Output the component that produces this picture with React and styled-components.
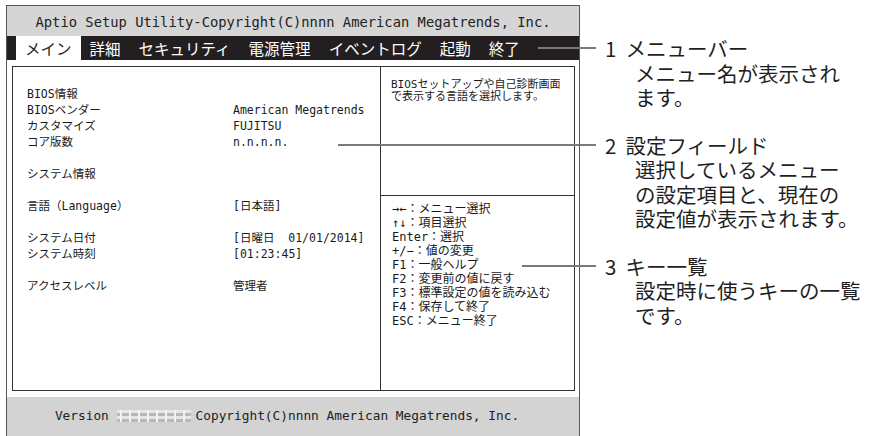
import React from 'react'
import styled, { createGlobalStyle } from 'styled-components';

const mono = `"DejaVu Sans Mono", "Noto Sans CJK JP", monospace`;
const jp = `"Noto Sans CJK JP", sans-serif`;

const menus = ['メイン', '詳細', 'セキュリティ', '電源管理', 'イベントログ', '起動', '終了'];

const settings = [
    [
        { label: 'BIOS情報' },
        { label: 'BIOSベンダー', value: 'American Megatrends' },
        { label: 'カスタマイズ', value: 'FUJITSU' },
        { label: 'コア版数', value: 'n.n.n.n.' },
    ],
    [{ label: 'システム情報' }],
    [{ label: '言語（Language）', value: '[日本語]' }],
    [
        { label: 'システム日付', value: '[日曜日  01/01/2014]' },
        { label: 'システム時刻', value: '[01:23:45]' },
    ],
    [{ label: 'アクセスレベル', value: '管理者' }],
];

const keys = [
    '→←：メニュー選択',
    '↑↓：項目選択',
    'Enter：選択',
    '+/−：値の変更',
    'F1：一般ヘルプ',
    'F2：変更前の値に戻す',
    'F3：標準設定の値を読み込む',
    'F4：保存して終了',
    'ESC：メニュー終了',
];

const notes = [
    { num: '1', title: 'メニューバー', lines: ['メニュー名が表示され', 'ます。'] },
    { num: '2', title: '設定フィールド', lines: ['選択しているメニュー', 'の設定項目と、現在の', '設定値が表示されます。'] },
    { num: '3', title: 'キー一覧', lines: ['設定時に使うキーの一覧', 'です。'] },
];

const leaders = [
    { top: 47, left: 538, width: 58 },
    { top: 144, left: 338, width: 258 },
    { top: 265, left: 522, width: 74 },
];

function App() {
    return (
        <StyledPage>
            <GlobalStyle />
            <Screen>
                <TitleBar>Aptio Setup Utility-Copyright(C)nnnn American Megatrends, Inc.</TitleBar>
                <MenuBar>
                    {menus.map((m, i) => (
                        <MenuItem key={m} $active={i === 0}>{m}</MenuItem>
                    ))}
                </MenuBar>
                <Body>
                    <Panel>
                        <Fields>
                            {settings.map((group, gi) => (
                                <Group key={gi}>
                                    {group.map((row) => (
                                        <Row key={row.label}>
                                            <span>{row.label}</span>
                                            <span>{row.value}</span>
                                        </Row>
                                    ))}
                                </Group>
                            ))}
                        </Fields>
                        <Side>
                            <Help>
                                <div>BIOSセットアップや自己診断画面</div>
                                <div>で表示する言語を選択します。</div>
                            </Help>
                            <Keys>
                                {keys.map((k) => <div key={k}>{k}</div>)}
                            </Keys>
                        </Side>
                    </Panel>
                </Body>
                <Footer>
                    Version <Masked />Copyright(C)nnnn American Megatrends, Inc.
                </Footer>
            </Screen>
            <Notes>
                {notes.map((n) => (
                    <Note key={n.num}>
                        <NoteHead>
                            <NoteNum>{n.num}</NoteNum>
                            <span>{n.title}</span>
                        </NoteHead>
                        {n.lines.map((l) => <NoteLine key={l}>{l}</NoteLine>)}
                    </Note>
                ))}
            </Notes>
            {leaders.map((l) => (
                <Leader key={l.top} $top={l.top} $left={l.left} $width={l.width} />
            ))}
        </StyledPage>
    )
}

const GlobalStyle = createGlobalStyle`
    body{
        margin: 0;
        background: #fff;
    }
`;

const StyledPage = styled.div`
    position: relative;
    width: 873px;
    height: 436px;
    overflow: hidden;
    display: flex;
    align-items: flex-start;
    background: #fff;
`;

const Screen = styled.div`
    margin: 5px 0 0 6px;
    width: 574px;
    height: 440px;
    box-sizing: border-box;
    border: 1px solid #555;
    border-bottom: none;
    display: flex;
    flex-direction: column;
    flex: none;
`;

const TitleBar = styled.div`
    height: 30px;
    padding-top: 2px;
    box-sizing: border-box;
    background: #d5d5d5;
    display: flex;
    align-items: center;
    justify-content: center;
    font-family: ${mono};
    font-size: 13.8px;
    color: #222;
    white-space: pre;
`;

const MenuBar = styled.div`
    height: 24px;
    background: #231f20;
    display: flex;
    align-items: stretch;
    padding-left: 9px;
`;

const MenuItem = styled.div`
    padding: 0 9px;
    display: flex;
    align-items: center;
    font-family: ${jp};
    font-size: 15.5px;
    color: ${(p) => (p.$active ? '#231f20' : '#fff')};
    background: ${(p) => (p.$active ? '#fff' : 'transparent')};
`;

const Body = styled.div`
    padding: 6px 4px 6px 5px;
    background: #fff;
`;

const Panel = styled.div`
    height: 325px;
    box-sizing: border-box;
    border: 1px solid #333;
    display: grid;
    grid-template-columns: 367px 1fr;
`;

const Fields = styled.div`
    padding: 19px 0 0 14px;
`;

const Group = styled.div`
    margin-bottom: 16px;
`;

const Row = styled.div`
    display: grid;
    grid-template-columns: 206px 1fr;
    line-height: 16px;
    font-family: ${mono};
    font-size: 11.5px;
    color: #1a1a1a;
    white-space: pre;
`;

const Side = styled.div`
    border-left: 1px solid #333;
    display: flex;
    flex-direction: column;
`;

const Help = styled.div`
    height: 129px;
    box-sizing: border-box;
    border-bottom: 1px solid #333;
    padding: 12px 0 0 10px;
    font-family: ${mono};
    font-size: 11px;
    line-height: 12px;
    color: #1a1a1a;
`;

const Keys = styled.div`
    padding: 6px 0 0 11px;
    font-family: ${mono};
    font-size: 12px;
    line-height: 14px;
    color: #1a1a1a;
`;

const Footer = styled.div`
    flex: 1;
    background: #d3d3d3;
    display: flex;
    justify-content: center;
    align-items: flex-start;
    padding: 11px 12px 0 0;
    font-family: ${mono};
    font-size: 12.8px;
    line-height: 16px;
    color: #222;
    white-space: pre;
`;

const Masked = styled.span`
    display: inline-block;
    width: 74px;
    height: 12px;
    margin: 2px 5px 0 0;
    background:
        repeating-linear-gradient(90deg, transparent 0 3px, #f2f2f2 3px 5px, transparent 5px 9px),
        repeating-linear-gradient(0deg, #b8b8b8 0 3px, #e6e6e6 3px 6px);
`;

const Notes = styled.div`
    padding: 36px 0 0 25px;
    font-family: ${jp};
    font-size: 20.5px;
    line-height: 24.5px;
    color: #1f1f1f;
`;

const Note = styled.div`
    margin-bottom: 23px;
`;

const NoteHead = styled.div`
    display: flex;
`;

const NoteNum = styled.span`
    margin-right: 9px;
`;

const NoteLine = styled.div`
    padding-left: 30px;
`;

const Leader = styled.div`
    position: absolute;
    top: ${(p) => p.$top}px;
    left: ${(p) => p.$left}px;
    width: ${(p) => p.$width}px;
    height: 2px;
    background: #7a7a7a;
`;

export default App
